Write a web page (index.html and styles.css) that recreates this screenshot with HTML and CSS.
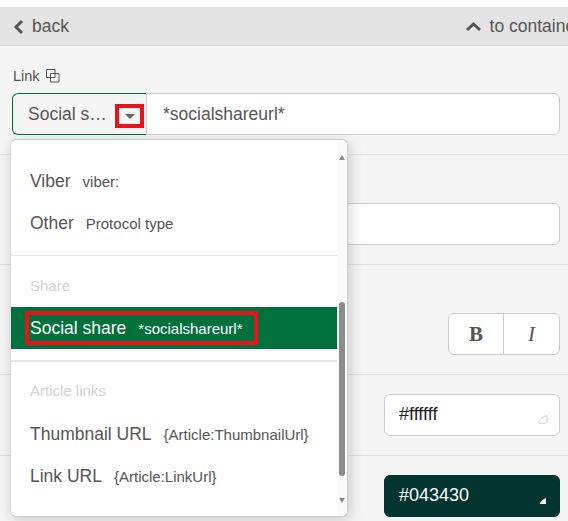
FILE: index.html
```html
<!DOCTYPE html>
<html lang="en">
<head>
    <meta charset="UTF-8">
    <meta name="viewport" content="width=device-width, initial-scale=1.0">
    <title>Link settings</title>
    <link rel="stylesheet" href="styles.css">
</head>
<body>
    <div class="panel">
        <div class="topbar">
            <a class="topbar-link">
                <svg class="chevron" width="11" height="16" viewBox="0 0 11 16"><path d="M9 2 L3 8 L9 14" fill="none" stroke="#555" stroke-width="3"/></svg>
                back
            </a>
            <a class="topbar-link">
                <svg class="chevron" width="17" height="11" viewBox="0 0 17 11"><path d="M2 9 L8.5 3 L15 9" fill="none" stroke="#555" stroke-width="3"/></svg>
                to container
            </a>
        </div>

        <div class="section section-link">
            <div class="label">
                Link
                <svg width="14" height="14" viewBox="0 0 14 14"><path d="M0.5 0.5h8.5v8h-8.5z M4.5 4.5h8.5v8.5h-8.5z" fill="none" stroke="#555" stroke-width="1"/></svg>
            </div>
            <div class="input-group">
                <div class="type-select">
                    <span class="type-name">Social s…</span>
                    <span class="caret-box"><span class="caret"></span></span>
                </div>
                <div class="type-value">*socialshareurl*</div>
            </div>
        </div>

        <div class="section section-text">
            <div class="text-input"></div>
        </div>

        <div class="section section-style">
            <div class="btn-group">
                <div class="btn btn-bold">B</div>
                <div class="btn btn-italic">I</div>
            </div>
        </div>

        <div class="section section-color">
            <div class="color-input">#ffffff
                <svg class="corner" width="10" height="9" viewBox="0 0 10 9"><path d="M0.8 6.5 C2 3.5 5 1.5 9 0.8 V6.5 C9 7.6 8.4 8.2 7.4 8.2 H2 C1 8.2 0.5 7.5 0.8 6.5 Z" fill="none" stroke="#ccc" stroke-width="1"/></svg>
            </div>
        </div>

        <div class="section section-color section-last">
            <div class="color-input color-dark">#043430
                <svg class="corner" width="10" height="9" viewBox="0 0 10 9"><path d="M1.5 8 C2.5 5.5 5 3 8 2 V8 Z" fill="#eee"/></svg>
            </div>
        </div>

        <div class="dropdown">
            <div class="dropdown-list">
                <div class="item"><span class="item-name">Viber</span><span class="item-code">viber:</span></div>
                <div class="item"><span class="item-name">Other</span><span class="item-code">Protocol type</span></div>
                <div class="divider"></div>
                <div class="group-title">Share</div>
                <div class="item item-active">
                    <span class="item-mark"><span class="item-name">Social share</span><span class="item-code">*socialshareurl*</span></span>
                </div>
                <div class="divider divider-tight"></div>
                <div class="group-title group-title-articles">Article links</div>
                <div class="item"><span class="item-name">Thumbnail URL</span><span class="item-code">{Article:ThumbnailUrl}</span></div>
                <div class="item"><span class="item-name">Link URL</span><span class="item-code">{Article:LinkUrl}</span></div>
            </div>
            <div class="scrollbar">
                <span class="arrow-up"></span>
                <span class="thumb"></span>
                <span class="arrow-down"></span>
            </div>
        </div>
    </div>
</body>
</html>
```

FILE: styles.css
```css
html, body {
    margin: 0;
    height: 521px;
    overflow: hidden;
    background-color: #fff;
}
body {
    font-family: "Liberation Sans", Arial, sans-serif;
    color: #555;
    padding-top: 7px;
    box-sizing: border-box;
}
.panel {
    position: relative;
    width: 568px;
    height: 514px;
    background-color: #f5f5f5;
    border-top: 1px solid #ddd;
    box-sizing: border-box;
    overflow: hidden;
}
.topbar {
    display: flex;
    justify-content: space-between;
    height: 38px;
    padding: 0 0 0 13px;
    background-color: #e4e4e4;
    border-bottom: 1px solid #d9d9d9;
    box-sizing: border-box;
    white-space: nowrap;
}
.topbar-link {
    display: flex;
    align-items: center;
    gap: 8px;
    font-size: 17.5px;
}
.topbar-link:last-child {
    margin-right: -13px;
}
.section {
    display: flex;
    justify-content: flex-end;
    padding: 0 8px 0 12px;
    border-bottom: 1px solid #e2e2e2;
    box-sizing: border-box;
}
.section-link {
    display: block;
    height: 109px;
    padding-top: 23px;
}
.section-text {
    height: 110px;
    padding-top: 48px;
}
.section-style {
    height: 110px;
    padding-top: 48px;
}
.section-color {
    height: 81px;
    padding-top: 19px;
}
.section-last {
    border-bottom: none;
}
.label {
    display: flex;
    align-items: center;
    gap: 6px;
    height: 14px;
    margin: 0 0 10px 1px;
    font-size: 14.5px;
}
.input-group {
    display: flex;
    height: 42px;
    font-size: 17.5px;
}
.type-select {
    display: flex;
    align-items: center;
    justify-content: space-between;
    width: 134px;
    padding: 0 2px 0 15px;
    border: 1px solid #00703c;
    border-right: none;
    border-radius: 6px 0 0 6px;
    box-sizing: border-box;
}
.caret-box {
    display: flex;
    align-items: center;
    justify-content: center;
    width: 29px;
    height: 24px;
    margin-top: 4px;
    border: 4px solid #e8141c;
    box-sizing: border-box;
}
.caret {
    border-top: 5px solid #666;
    border-left: 5px solid transparent;
    border-right: 5px solid transparent;
}
.type-value {
    flex: 1;
    display: flex;
    align-items: center;
    padding-left: 16px;
    background-color: #fff;
    border: 1px solid #ccc;
    border-radius: 0 6px 6px 0;
}
.text-input {
    width: 420px;
    height: 42px;
    background-color: #fff;
    border: 1px solid #ccc;
    border-radius: 6px;
    box-sizing: border-box;
}
.btn-group {
    display: flex;
    width: 112px;
    height: 42px;
    background-color: #fff;
    border: 1px solid #ccc;
    border-radius: 6px;
    box-sizing: border-box;
}
.btn {
    display: flex;
    align-items: center;
    justify-content: center;
    font-family: "Liberation Serif", "Times New Roman", serif;
    font-size: 21px;
}
.btn-bold {
    width: 54px;
    font-weight: bold;
    border-right: 1px solid #ccc;
}
.btn-italic {
    flex: 1;
    font-style: italic;
}
.color-input {
    position: relative;
    width: 176px;
    height: 42px;
    padding: 9px 14px;
    font-size: 18px;
    line-height: 20px;
    color: #222;
    background-color: #fff;
    border: 1px solid #ccc;
    border-radius: 6px;
    box-sizing: border-box;
}
.color-dark {
    color: #fff;
    background-color: #043430;
    border-color: #043430;
}
.corner {
    position: absolute;
    right: 11px;
    bottom: 11px;
}
.dropdown {
    position: absolute;
    left: 10px;
    top: 131px;
    display: flex;
    width: 338px;
    height: 378px;
    background-color: #fff;
    border: 1px solid #ccc;
    border-left-color: #ddd;
    border-radius: 6px;
    box-sizing: border-box;
    box-shadow: 2px 3px 14px rgba(0, 0, 0, 0.18);
}
.dropdown-list {
    width: 326px;
    padding-top: 20px;
}
.item {
    display: flex;
    align-items: center;
    height: 42px;
    padding-left: 19px;
    white-space: nowrap;
}
.item-name {
    font-size: 17.5px;
    margin-right: 12px;
}
.item-code {
    font-size: 15px;
}
.item-active {
    padding-left: 14px;
    color: #fff;
    background-color: #00703c;
}
.item-mark {
    display: flex;
    align-items: center;
    width: 233px;
    height: 34px;
    padding-left: 1px;
    border: 4px solid #e8141c;
    box-sizing: border-box;
}
.divider {
    height: 1px;
    margin-top: 11px;
    background-color: #e6e6e6;
}
.divider-tight {
    height: 2px;
}
.group-title {
    height: 51px;
    padding: 21px 0 0 19px;
    font-size: 15px;
    line-height: 18px;
    color: #d2d2d2;
    box-sizing: border-box;
}
.group-title-articles {
    padding-top: 20px;
}
.scrollbar {
    position: relative;
    flex: 1;
    background-color: #fbfbfb;
    border-radius: 0 6px 6px 0;
}
.thumb {
    position: absolute;
    left: 2px;
    top: 162px;
    width: 6px;
    height: 174px;
    background-color: #8c8c8c;
    border-radius: 3px;
}
.arrow-up, .arrow-down {
    position: absolute;
    left: 2px;
    border-left: 3px solid transparent;
    border-right: 3px solid transparent;
}
.arrow-up {
    top: 15px;
    border-bottom: 5px solid #8c8c8c;
}
.arrow-down {
    bottom: 13px;
    border-top: 5px solid #8c8c8c;
}
```
